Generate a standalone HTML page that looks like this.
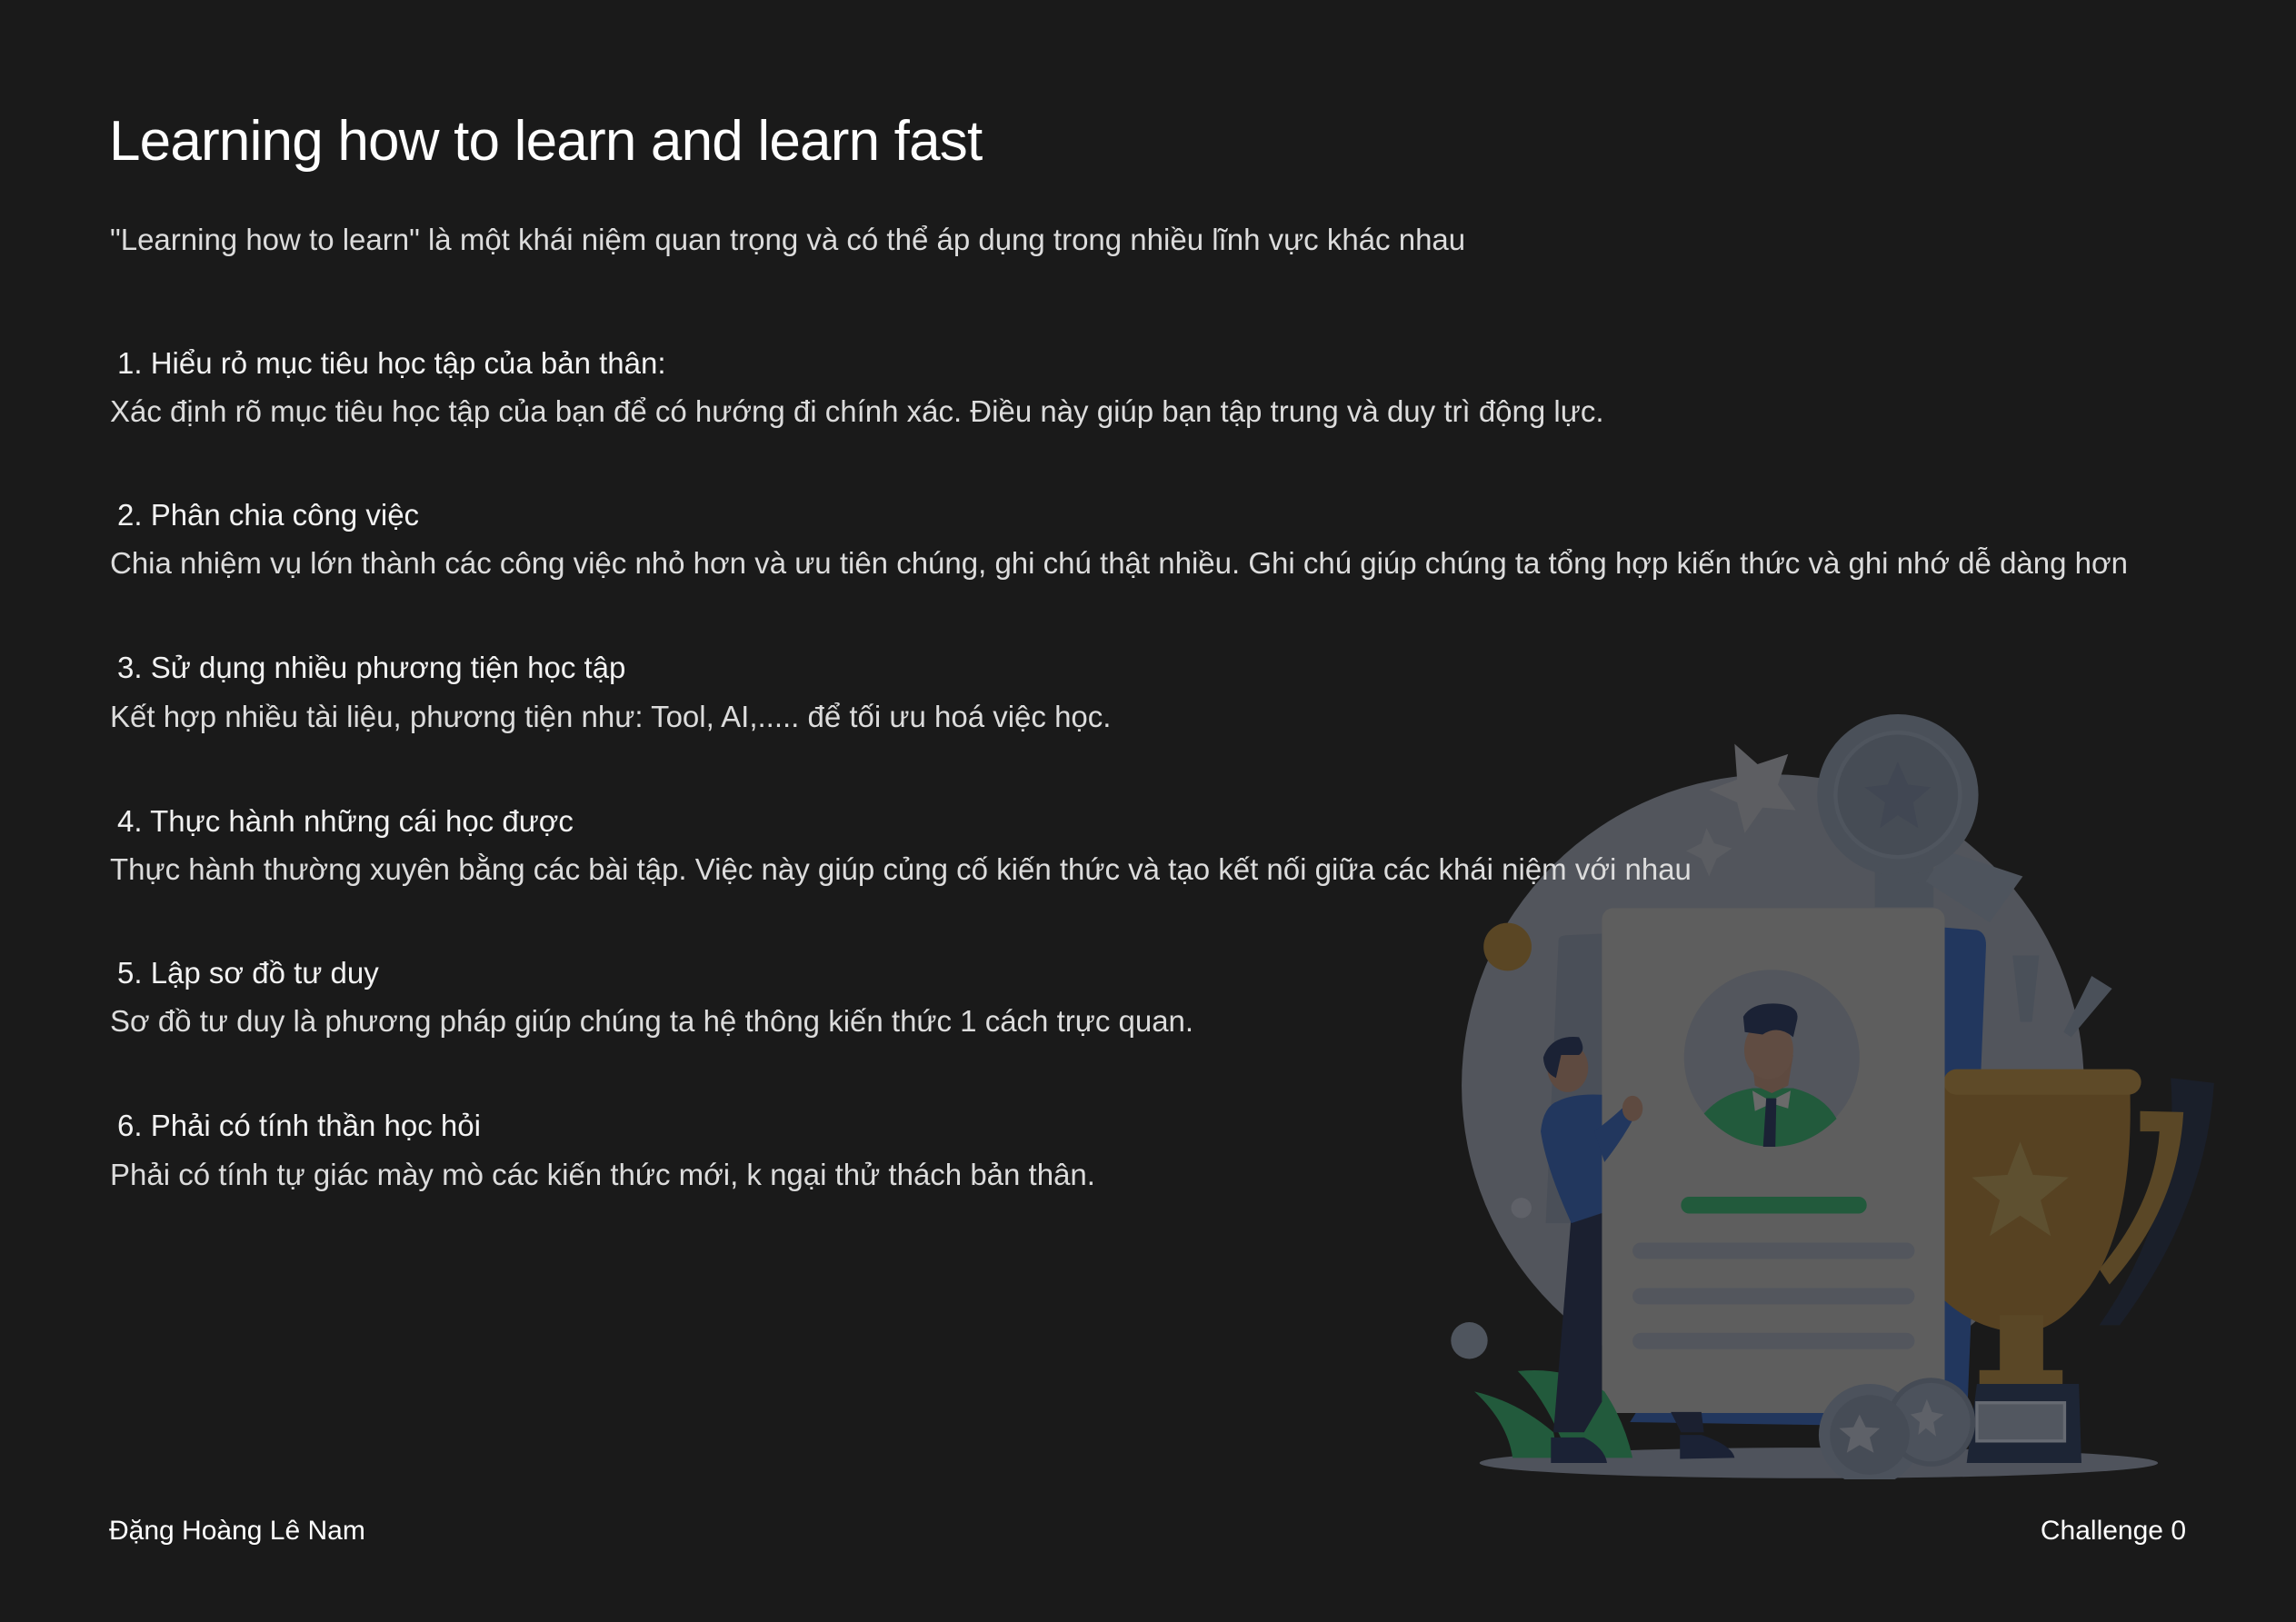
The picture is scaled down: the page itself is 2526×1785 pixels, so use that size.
<!DOCTYPE html>
<html><head><meta charset="utf-8">
<style>
html,body{margin:0;padding:0;background:#1a1a1a;}
body{width:2526px;height:1785px;position:relative;overflow:hidden;font-family:"Liberation Sans","DejaVu Sans",sans-serif;color:#e8e8e8;}
.t{position:absolute;white-space:nowrap;line-height:50px;height:50px;}
.title{position:absolute;left:120px;top:118px;font-size:62px;letter-spacing:-0.8px;color:#fff;line-height:76px;white-space:nowrap;}
.b{font-size:33px;left:121px;color:#dcdcdc;}
.h{font-size:33px;left:129px;color:#f2f2f2;}
svg{position:absolute;}
</style></head><body>
<svg style="left:1580px;top:768px" width="880" height="860" viewBox="0 0 1568 1532">
<ellipse cx="750" cy="1500" rx="665" ry="30" fill="#4f535c"/>
<circle cx="660" cy="760" r="610" fill="#52555c"/>
<polygon points="585,90 630,130 690,110 670,170 705,220 640,215 605,265 590,205 535,180 590,160" fill="#5d5e62"/>
<polygon points="530,255 545,285 580,295 550,315 535,350 520,315 490,300 520,285" fill="#5b5d62"/>
<path d="M860,330 L975,330 L975,410 L860,410 Z" fill="#4a5059"/>
<path d="M1000,300 L1150,350 L1085,440 L960,360 Z" fill="#4e545d"/>
<circle cx="905" cy="190" r="158" fill="#4a5059"/>
<circle cx="905" cy="190" r="122" fill="#464c55" stroke="#4f555e" stroke-width="8"/>
<polygon points="905,125 925,170 970,175 935,205 945,255 905,230 870,255 880,205 840,175 885,170" fill="#414753"/>
<circle cx="140" cy="488" r="47" fill="#5a4624"/>
<circle cx="65" cy="1260" r="36" fill="#4f555e"/>
<circle cx="167" cy="1000" r="20" fill="#5f6168"/>
<path d="M1130,505 L1182,505 L1168,635 L1145,635 Z" fill="#4a5059"/>
<path d="M1285,545 L1325,570 L1245,665 L1230,655 Z" fill="#4a5059"/>
<path d="M240,475 Q240,465 260,465 L330,462 L330,1030 L215,1030 Z" fill="#4a4f58"/>
<path d="M995,450 L1060,455 Q1078,460 1078,485 L1040,1430 L380,1420 Z" fill="#22375e"/>
<path d="M1440,745 L1525,755 Q1510,1000 1340,1230 L1300,1230 Q1460,1000 1440,745 Z" fill="#1a1f2a"/>
<path d="M1380,810 L1465,812 Q1455,1000 1320,1150 L1300,1120 Q1410,990 1418,850 L1380,850 Z" fill="#5a4726"/>
<path d="M995,760 L1360,760 Q1370,1060 1260,1180 Q1210,1240 1150,1245 Q1060,1240 995,1180 Z" fill="#574222"/>
<rect x="995" y="728" width="387" height="50" rx="25" fill="#5e4a28"/>
<polygon points="1145,870 1170,935 1240,940 1185,985 1205,1055 1145,1015 1085,1055 1105,985 1050,940 1120,935" fill="#5e5030"/>
<rect x="1105" y="1210" width="85" height="115" fill="#5a4726"/>
<rect x="1065" y="1318" width="163" height="37" fill="#5a4726"/>
<path d="M1060,1345 L1260,1345 L1265,1500 L1040,1500 Z" fill="#1d2535"/>
<rect x="1060" y="1382" width="172" height="75" fill="#525760" stroke="#666a72" stroke-width="6"/>
<rect x="325" y="412" width="672" height="990" rx="22" fill="#5e5e5e"/>
<circle cx="658" cy="705" r="172" fill="#53565d"/>
<path d="M525,815 Q560,775 620,765 L700,765 Q760,780 785,825 Q730,880 658,880 Q580,878 525,815 Z" fill="#225a3c"/>
<path d="M620,770 L655,790 L695,770 L690,805 L658,795 L625,810 Z" fill="#6a6a6a"/>
<path d="M647,785 L667,785 L665,880 L641,880 Z" fill="#1b2235"/>
<path d="M618,700 L700,700 L690,760 L658,775 L625,760 Z" fill="#5e4a40"/>
<ellipse cx="652" cy="690" rx="48" ry="58" fill="#604c42"/>
<path d="M602,625 Q620,595 675,600 Q712,605 708,630 L700,665 Q670,640 640,660 L605,655 Z" fill="#1b2235"/>
<rect x="480" y="978" width="364" height="33" rx="16" fill="#225a3c"/>
<rect x="385" y="1068" width="553" height="32" rx="16" fill="#53565d"/>
<rect x="385" y="1157" width="553" height="32" rx="16" fill="#53565d"/>
<rect x="385" y="1245" width="553" height="32" rx="16" fill="#53565d"/>
<path d="M75,1360 Q160,1380 230,1440 L240,1490 L150,1490 Q140,1420 75,1360 Z" fill="#225a3c"/>
<path d="M160,1320 Q260,1310 330,1360 Q370,1420 385,1490 L260,1490 Q220,1380 160,1320 Z" fill="#225a3c"/>
<path d="M265,1015 L325,1010 L325,1380 L290,1440 L230,1440 Z" fill="#1b2030"/>
<path d="M460,1400 L520,1400 L525,1440 L480,1440 Z" fill="#1b2030"/>
<path d="M225,1450 L290,1450 Q330,1470 335,1500 L225,1500 Z" fill="#1b2235"/>
<path d="M478,1445 L520,1445 Q580,1465 585,1490 L478,1492 Z" fill="#1b2235"/>
<path d="M240,790 Q270,775 325,778 L325,1010 L265,1030 Q215,920 205,850 Q210,800 240,790 Z" fill="#22375e"/>
<path d="M310,850 Q350,820 380,790 L400,800 Q370,860 330,910 Z" fill="#22375e"/>
<ellipse cx="385" cy="805" rx="20" ry="25" fill="#5e4a40"/>
<ellipse cx="258" cy="725" rx="40" ry="48" fill="#5e4a40"/>
<path d="M210,705 Q225,660 280,665 Q295,690 280,700 L245,700 L235,745 Q212,735 210,705 Z" fill="#1b2235"/>
<circle cx="850" cy="1445" r="100" fill="#4c525c"/>
<circle cx="970" cy="1420" r="82" fill="#4c525c" stroke="#454b55" stroke-width="10"/>
<circle cx="850" cy="1445" r="78" fill="#464c56"/>
<polygon points="830,1405 842,1430 870,1432 850,1450 858,1480 830,1465 805,1480 812,1450 790,1432 818,1430" fill="#5e6168"/>
<polygon points="962,1375 972,1400 995,1405 975,1420 980,1448 960,1432 945,1445 948,1420 930,1405 952,1400" fill="#5e6168"/>
</svg>
<div class="title">Learning how to learn and learn fast</div>
<div class="t b" style="top:239px">"Learning how to learn" là một khái niệm quan trọng và có thể áp dụng trong nhiều lĩnh vực khác nhau</div>
<div class="t h" style="top:375px">1. Hiểu rỏ mục tiêu học tập của bản thân:</div>
<div class="t b" style="top:428px">Xác định rõ mục tiêu học tập của bạn để có hướng đi chính xác. Điều này giúp bạn tập trung và duy trì động lực.</div>
<div class="t h" style="top:542px">2. Phân chia công việc</div>
<div class="t b" style="top:595px">Chia nhiệm vụ lớn thành các công việc nhỏ hơn và ưu tiên chúng, ghi chú thật nhiều. Ghi chú giúp chúng ta tổng hợp kiến thức và ghi nhớ dễ dàng hơn</div>
<div class="t h" style="top:710px">3. Sử dụng nhiều phương tiện học tập</div>
<div class="t b" style="top:764px">Kết hợp nhiều tài liệu, phương tiện như: Tool, AI,..... để tối ưu hoá việc học.</div>
<div class="t h" style="top:879px">4. Thực hành những cái học được</div>
<div class="t b" style="top:932px">Thực hành thường xuyên bằng các bài tập. Việc này giúp củng cố kiến thức và tạo kết nối giữa các khái niệm với nhau</div>
<div class="t h" style="top:1046px">5. Lập sơ đồ tư duy</div>
<div class="t b" style="top:1099px">Sơ đồ tư duy là phương pháp giúp chúng ta hệ thông kiến thức 1 cách trực quan.</div>
<div class="t h" style="top:1214px">6. Phải có tính thần học hỏi</div>
<div class="t b" style="top:1268px">Phải có tính  tự giác mày mò các kiến thức mới, k ngại thử thách bản thân.</div>
<div class="t" style="top:1660px;left:120px;font-size:30px;color:#fff">Đặng Hoàng Lê Nam</div>
<div class="t" style="top:1660px;right:121px;font-size:30px;color:#fff">Challenge 0</div>
</body></html>
